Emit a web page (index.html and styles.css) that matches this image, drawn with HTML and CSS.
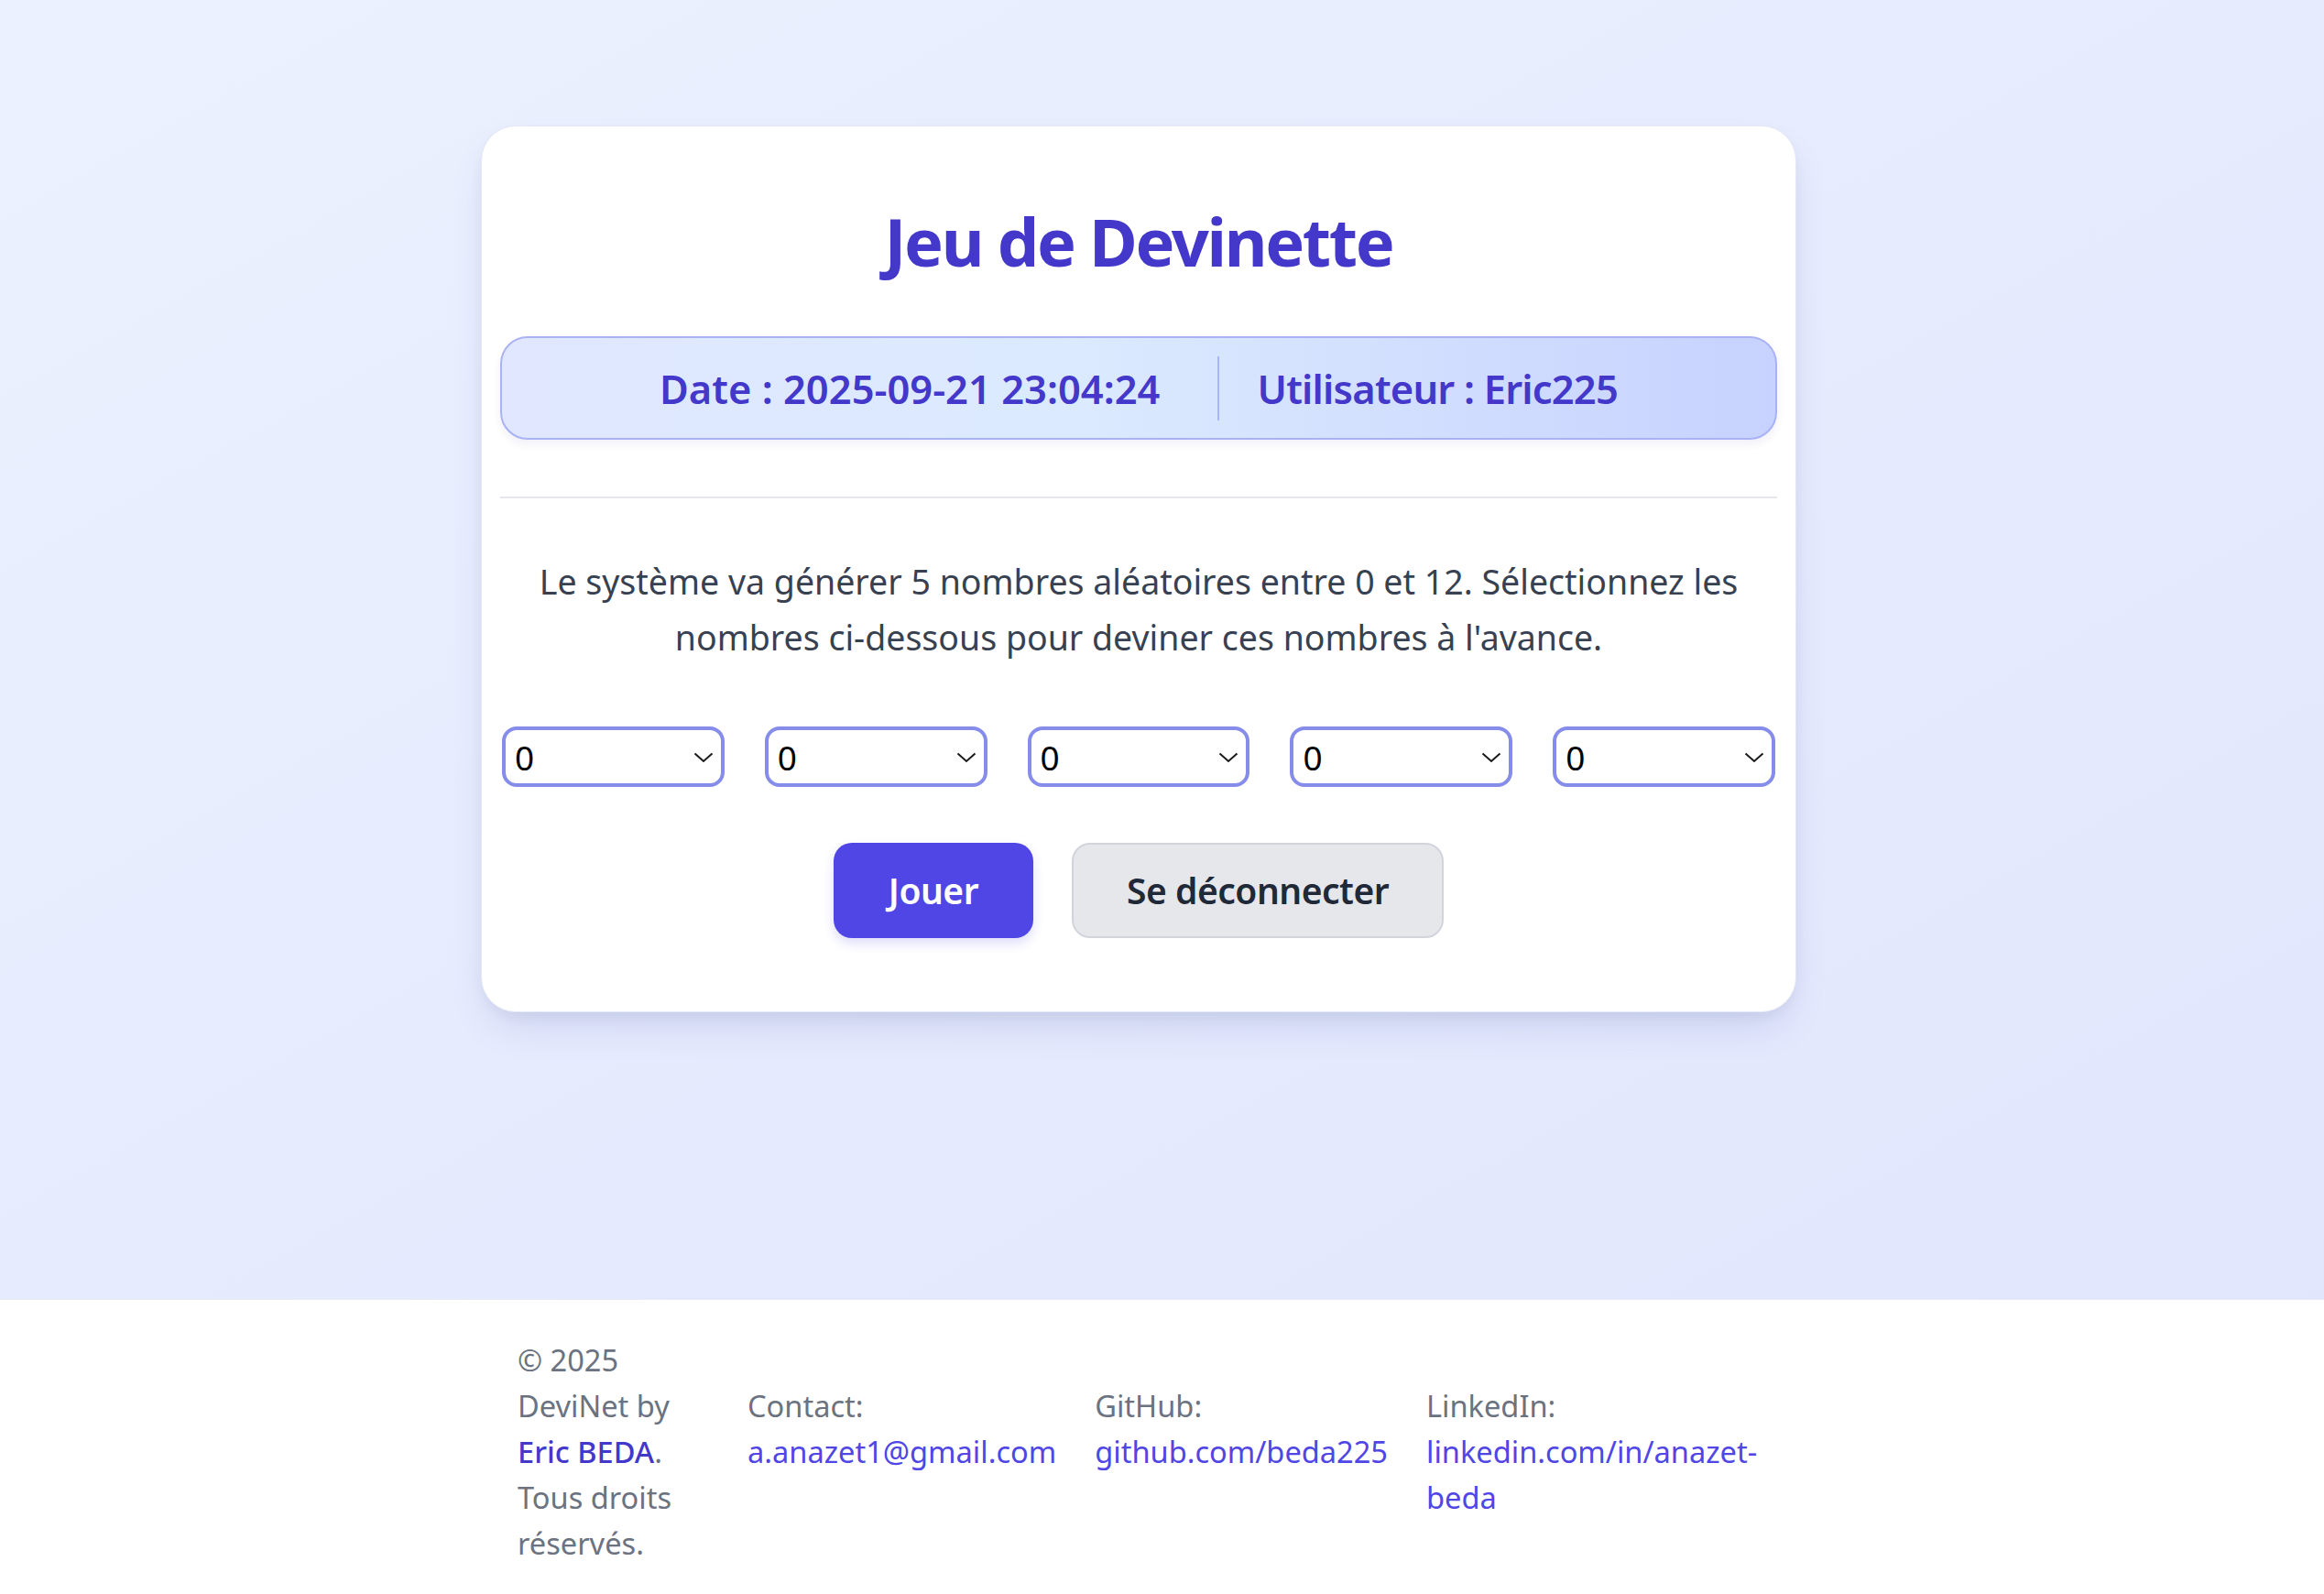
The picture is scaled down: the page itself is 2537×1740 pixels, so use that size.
FILE: index.html
```html
<!DOCTYPE html>
<html lang="fr">
<head>
<meta charset="utf-8">
<title>Jeu de Devinette</title>
<link rel="stylesheet" href="styles.css">
</head>
<body>
<main class="main">
  <section class="card">
    <h1 class="title">Jeu de Devinette</h1>
    <div class="info">
      <span class="info-date">Date : 2025-09-21 23:04:24</span>
      <span class="info-sep"></span>
      <span class="info-user">Utilisateur : Eric225</span>
    </div>
    <hr class="divider">
    <p class="intro">Le système va générer 5 nombres aléatoires entre 0 et 12. Sélectionnez les nombres ci-dessous pour deviner ces nombres à l'avance.</p>
    <form class="guess">
      <div class="selects">
        <div class="select-wrap">
          <select class="select"><option>0</option><option>1</option><option>2</option></select>
          <svg class="chev" viewBox="0 0 22 12" width="22" height="12"><polyline points="1.5,1.5 11,10 20.5,1.5" fill="none" stroke="#1a1a1a" stroke-width="2"/></svg>
        </div>
        <div class="select-wrap">
          <select class="select"><option>0</option><option>1</option><option>2</option></select>
          <svg class="chev" viewBox="0 0 22 12" width="22" height="12"><polyline points="1.5,1.5 11,10 20.5,1.5" fill="none" stroke="#1a1a1a" stroke-width="2"/></svg>
        </div>
        <div class="select-wrap">
          <select class="select"><option>0</option><option>1</option><option>2</option></select>
          <svg class="chev" viewBox="0 0 22 12" width="22" height="12"><polyline points="1.5,1.5 11,10 20.5,1.5" fill="none" stroke="#1a1a1a" stroke-width="2"/></svg>
        </div>
        <div class="select-wrap">
          <select class="select"><option>0</option><option>1</option><option>2</option></select>
          <svg class="chev" viewBox="0 0 22 12" width="22" height="12"><polyline points="1.5,1.5 11,10 20.5,1.5" fill="none" stroke="#1a1a1a" stroke-width="2"/></svg>
        </div>
        <div class="select-wrap">
          <select class="select"><option>0</option><option>1</option><option>2</option></select>
          <svg class="chev" viewBox="0 0 22 12" width="22" height="12"><polyline points="1.5,1.5 11,10 20.5,1.5" fill="none" stroke="#1a1a1a" stroke-width="2"/></svg>
        </div>
      </div>
      <div class="actions">
        <button type="button" class="btn btn-primary">Jouer</button>
        <button type="button" class="btn btn-secondary">Se déconnecter</button>
      </div>
    </form>
  </section>
</main>
<footer class="footer">
  <div class="footer-inner">
    <p class="copy">© 2025 DeviNet by <a class="author" href="#">Eric BEDA</a>. Tous droits réservés.</p>
    <div class="links">
      <div class="link-col"><span class="label">Contact:</span><a class="link" href="#">a.anazet1@gmail.com</a></div>
      <div class="link-col"><span class="label">GitHub:</span><a class="link" href="#">github.com/beda225</a></div>
      <div class="link-col link-col-wide"><span class="label">LinkedIn:</span><a class="link" href="#">linkedin.com/in/anazet-beda</a></div>
    </div>
  </div>
</footer>
</body>
</html>
```

FILE: styles.css
```css
* {
  box-sizing: border-box;
}

body {
  margin: 0;
  font-family: "Noto Sans", "Open Sans", sans-serif;
  color: #374151;
  background: #ffffff;
}

.main {
  min-height: 1418px;
  padding: 137px 51px 0 0;
  background: linear-gradient(to bottom right, #ebf1fe, #e1e6fd);
}

.card {
  width: 1436px;
  margin: 0 auto;
  background: #ffffff;
  border: 1px solid #e4e8f6;
  border-radius: 38px;
  padding: 82px 20px 80px;
  box-shadow: 0 22px 44px -12px rgba(60, 70, 160, 0.18), 0 6px 14px rgba(0, 0, 0, 0.04);
}

.title {
  margin: 0;
  text-align: center;
  font-size: 72px;
  line-height: 86px;
  font-weight: 700;
  color: #4338ca;
  letter-spacing: -2.3px;
}

.info {
  margin-top: 61px;
  height: 113px;
  display: flex;
  align-items: center;
  justify-content: center;
  border: 2px solid #a9b2f5;
  border-radius: 30px;
  background: linear-gradient(to right, #e0e7ff, #dbeafe 45%, #c7d2fe);
  box-shadow: 0 5px 10px rgba(60, 70, 160, 0.08);
  color: #4338ca;
  font-size: 43.5px;
  font-weight: 600;
}

.info-date {
  letter-spacing: 0;
}

.info-user {
  letter-spacing: -0.8px;
}

.info-sep {
  width: 2px;
  height: 70px;
  margin: 0 42px 0 62px;
  background: #a5b4fc;
}

.divider {
  margin: 62px 0 0;
  border: 0;
  height: 2px;
  background: #e5e7eb;
}

.intro {
  margin: 60px 0 0;
  text-align: center;
  font-size: 37.5px;
  line-height: 61px;
  color: #374151;
}

.guess {
  margin: 0;
}

.selects {
  margin-top: 67px;
  padding: 0 2px;
  display: grid;
  grid-template-columns: repeat(5, 1fr);
  column-gap: 44px;
}

.select-wrap {
  position: relative;
}

.select {
  display: block;
  width: 100%;
  height: 66px;
  appearance: none;
  -webkit-appearance: none;
  border: 4px solid #858cea;
  border-radius: 16px;
  background: #ffffff;
  padding: 0 40px 0 10px;
  font-family: "Noto Sans", sans-serif;
  font-size: 37px;
  color: #000000;
}

.chev {
  position: absolute;
  right: 12px;
  top: 28px;
  pointer-events: none;
}

.actions {
  margin-top: 61px;
  display: flex;
  justify-content: center;
  gap: 42px;
}

.btn {
  font-family: "Noto Sans", sans-serif;
  font-size: 39px;
  line-height: 56px;
  font-weight: 600;
  padding: 22px 58px;
  border-radius: 20px;
  border: 2px solid transparent;
  letter-spacing: -0.5px;
}

.btn-primary {
  background: #4f46e5;
  color: #ffffff;
  box-shadow: 0 6px 12px rgba(79, 70, 229, 0.18);
}

.btn-secondary {
  background: #e5e7eb;
  border-color: #d1d5db;
  color: #1f2937;
}

.footer {
  background: #ffffff;
  border-top: 1px solid #e9ecf6;
  padding: 41px 51px 40px 0;
}

.footer-inner {
  width: 1436px;
  margin: 0 auto;
  padding: 0 40px;
  display: flex;
  align-items: center;
  gap: 40px;
  font-size: 32.6px;
  line-height: 50px;
  color: #6b7280;
}

.copy {
  margin: 0;
  width: 211px;
  flex: none;
}

.author {
  color: #4338ca;
  font-weight: 500;
  text-decoration: none;
}

.links {
  display: flex;
  align-items: flex-start;
  gap: 42px;
}

.link-col {
  display: flex;
  flex-direction: column;
  flex: none;
}

.link-col-wide {
  width: 380px;
}

.label {
  display: block;
}

.link {
  color: #4f46e5;
  text-decoration: none;
}
```
